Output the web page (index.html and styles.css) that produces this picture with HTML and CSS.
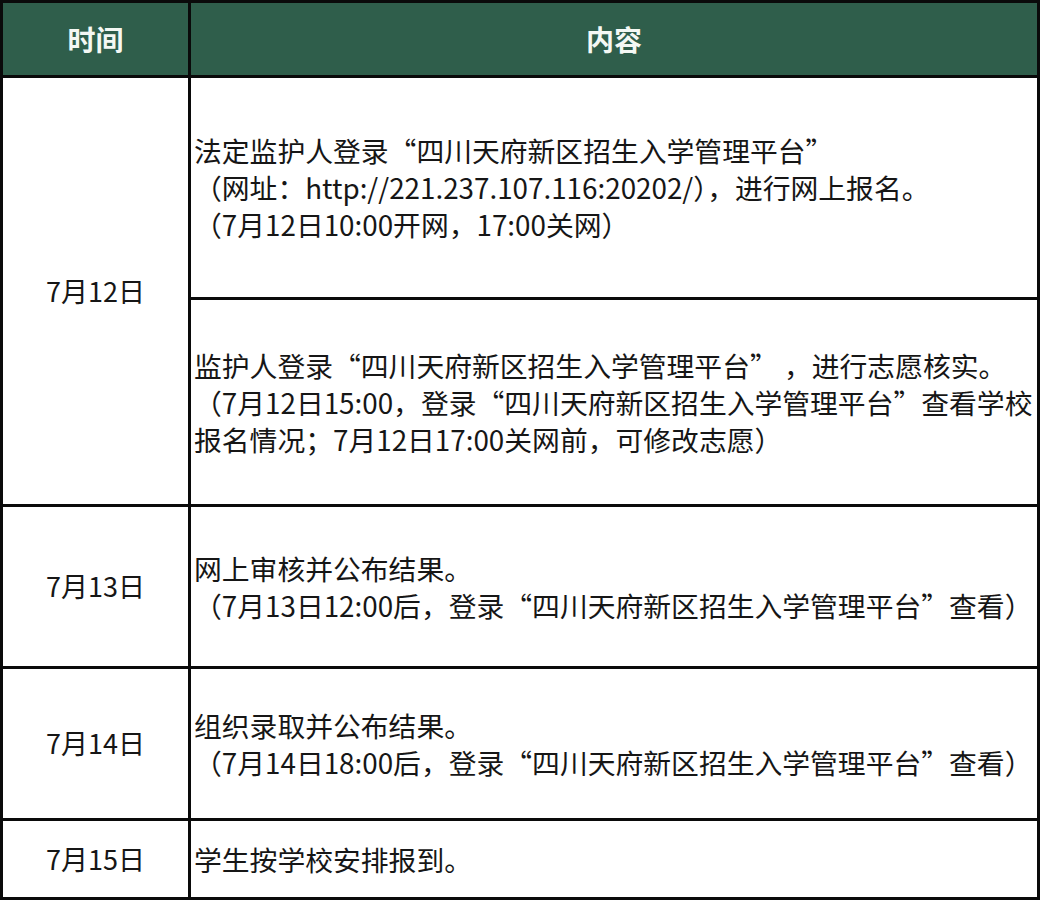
FILE: index.html
```html
<!DOCTYPE html>
<html lang="zh-CN">
<head>
<meta charset="utf-8">
<title>时间安排</title>
<link rel="stylesheet" href="styles.css">
</head>
<body>
<div class="schedule">
  <div class="cell head">时间</div>
  <div class="cell head">内容</div>

  <div class="cell date span2">7月12日</div>
  <div class="cell text r1a">法定监护人登录“四川天府新区招生入学管理平台”<br>（网址：http://221.237.107.116:20202/），进行网上报名。<br>（7月12日10:00开网，17:00关网）</div>
  <div class="cell text r1b">监护人登录“四川天府新区招生入学管理平台” ，进行志愿核实。<br>（7月12日15:00，登录“四川天府新区招生入学管理平台”查看学校<br>报名情况；7月12日17:00关网前，可修改志愿）</div>

  <div class="cell date">7月13日</div>
  <div class="cell text">网上审核并公布结果。<br>（7月13日12:00后，登录“四川天府新区招生入学管理平台”查看）</div>

  <div class="cell date">7月14日</div>
  <div class="cell text">组织录取并公布结果。<br>（7月14日18:00后，登录“四川天府新区招生入学管理平台”查看）</div>

  <div class="cell date">7月15日</div>
  <div class="cell text">学生按学校安排报到。</div>
</div>
</body>
</html>
```

FILE: styles.css
```css
html, body {
  margin: 0;
  padding: 0;
  background: #ffffff;
}

body {
  font-family: "Noto Sans CJK SC", "Noto Sans", sans-serif;
  color: #161616;
}

.schedule {
  width: 1040px;
  box-sizing: border-box;
  display: grid;
  grid-template-columns: 185px 1fr;
  grid-template-rows: 72px 219px 204px 159px 149px 76px;
  gap: 3px;
  padding: 3px;
  background: #0a0a0a;
}

.cell {
  background: #ffffff;
  display: flex;
  align-items: center;
  font-size: 27px;
  line-height: 37px;
}

.head {
  background: #2f5e4b;
  color: #f4f8f4;
  font-weight: 700;
  font-size: 28px;
  justify-content: center;
}

.date {
  justify-content: center;
  padding-bottom: 2px;
}

.span2 {
  grid-row: span 2;
}

.text {
  padding-left: 3px;
  display: block;
  align-content: center;
  white-space: nowrap;
  font-size: 27.8px;
  overflow: hidden;
}
```
